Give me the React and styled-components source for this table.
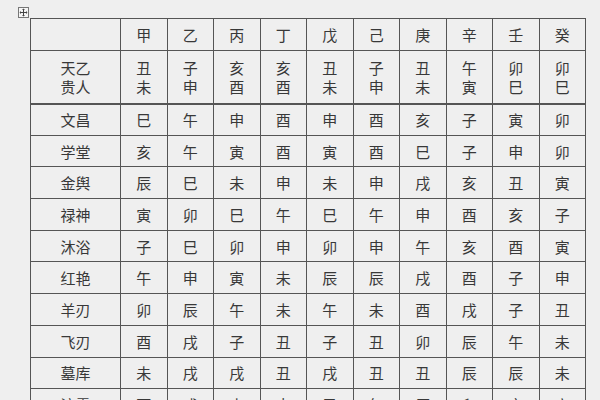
import styled, { createGlobalStyle } from "styled-components";

const GlobalStyle = createGlobalStyle`
  html, body {
    margin: 0;
    padding: 0;
    background: #efefef;
  }
  body {
    font-family: "Noto Sans CJK SC", "Noto Sans", sans-serif;
    color: #383838;
  }
`;

const Page = styled.div`
  width: 600px;
  height: 400px;
  overflow: hidden;
  padding: 18px 0 0 30px;
  box-sizing: border-box;
`;

const TableWrap = styled.div`
  position: relative;
  width: 556px;
`;

const MoveHandle = styled.div`
  position: absolute;
  top: -11px;
  left: -12px;
  width: 9px;
  height: 9px;
  border: 1px solid #777;
  background: #f6f6f6;
  display: flex;
  align-items: center;
  justify-content: center;
`;

const Table = styled.table`
  border-collapse: collapse;
  table-layout: fixed;
  width: 556px;
`;

const Row = styled.tr`
  height: ${(p) => p.$h}px;
`;

const Cell = styled.td`
  border: 1px solid #555;
  ${(p) => (p.$thick ? "border-bottom: 2px solid #555;" : "")}
  padding: 0;
  text-align: center;
  vertical-align: middle;
  font-size: 15px;
  line-height: 19px;
`;

const stems = ["甲", "乙", "丙", "丁", "戊", "己", "庚", "辛", "壬", "癸"];

const rows = [
  ["文昌", "巳午申酉申酉亥子寅卯"],
  ["学堂", "亥午寅酉寅酉巳子申卯"],
  ["金舆", "辰巳未申未申戌亥丑寅"],
  ["禄神", "寅卯巳午巳午申酉亥子"],
  ["沐浴", "子巳卯申卯申午亥酉寅"],
  ["红艳", "午申寅未辰辰戌酉子申"],
  ["羊刃", "卯辰午未午未酉戌子丑"],
  ["飞刃", "酉戌子丑子丑卯辰午未"],
  ["墓库", "未戌戌丑戌丑丑辰辰未"],
  ["流霞", "酉戌未申巳午辰卯亥寅"],
];

const guiren = ["丑未", "子申", "亥酉", "亥酉", "丑未", "子申", "丑未", "午寅", "卯巳", "卯巳"];

const App = () => {
  return (
    <Page>
      <GlobalStyle />
      <TableWrap>
        <MoveHandle>
          <svg width="9" height="9" viewBox="0 0 9 9">
            <path d="M4.5 1v7M1 4.5h7" stroke="#444" strokeWidth="1" />
            <path d="M4.5 0.5l-1.5 1.5h3zM4.5 8.5l-1.5-1.5h3zM0.5 4.5l1.5-1.5v3zM8.5 4.5l-1.5-1.5v3z" fill="#444" />
          </svg>
        </MoveHandle>
        <Table>
          <colgroup>
            <col style={{ width: 90 }} />
            {stems.map((s) => (
              <col key={s} />
            ))}
          </colgroup>
          <tbody>
            <Row $h={32}>
              <Cell />
              {stems.map((s) => (
                <Cell key={s}>{s}</Cell>
              ))}
            </Row>
            <Row $h={53}>
              <Cell $thick>
                天乙
                <br />
                贵人
              </Cell>
              {guiren.map((g, i) => (
                <Cell key={i} $thick>
                  {g[0]}
                  <br />
                  {g[1]}
                </Cell>
              ))}
            </Row>
            {rows.map(([name, vals]) => (
              <Row key={name} $h={31.7}>
                <Cell>{name}</Cell>
                {vals.split("").map((v, i) => (
                  <Cell key={i}>{v}</Cell>
                ))}
              </Row>
            ))}
          </tbody>
        </Table>
      </TableWrap>
    </Page>
  );
};

export default App;
